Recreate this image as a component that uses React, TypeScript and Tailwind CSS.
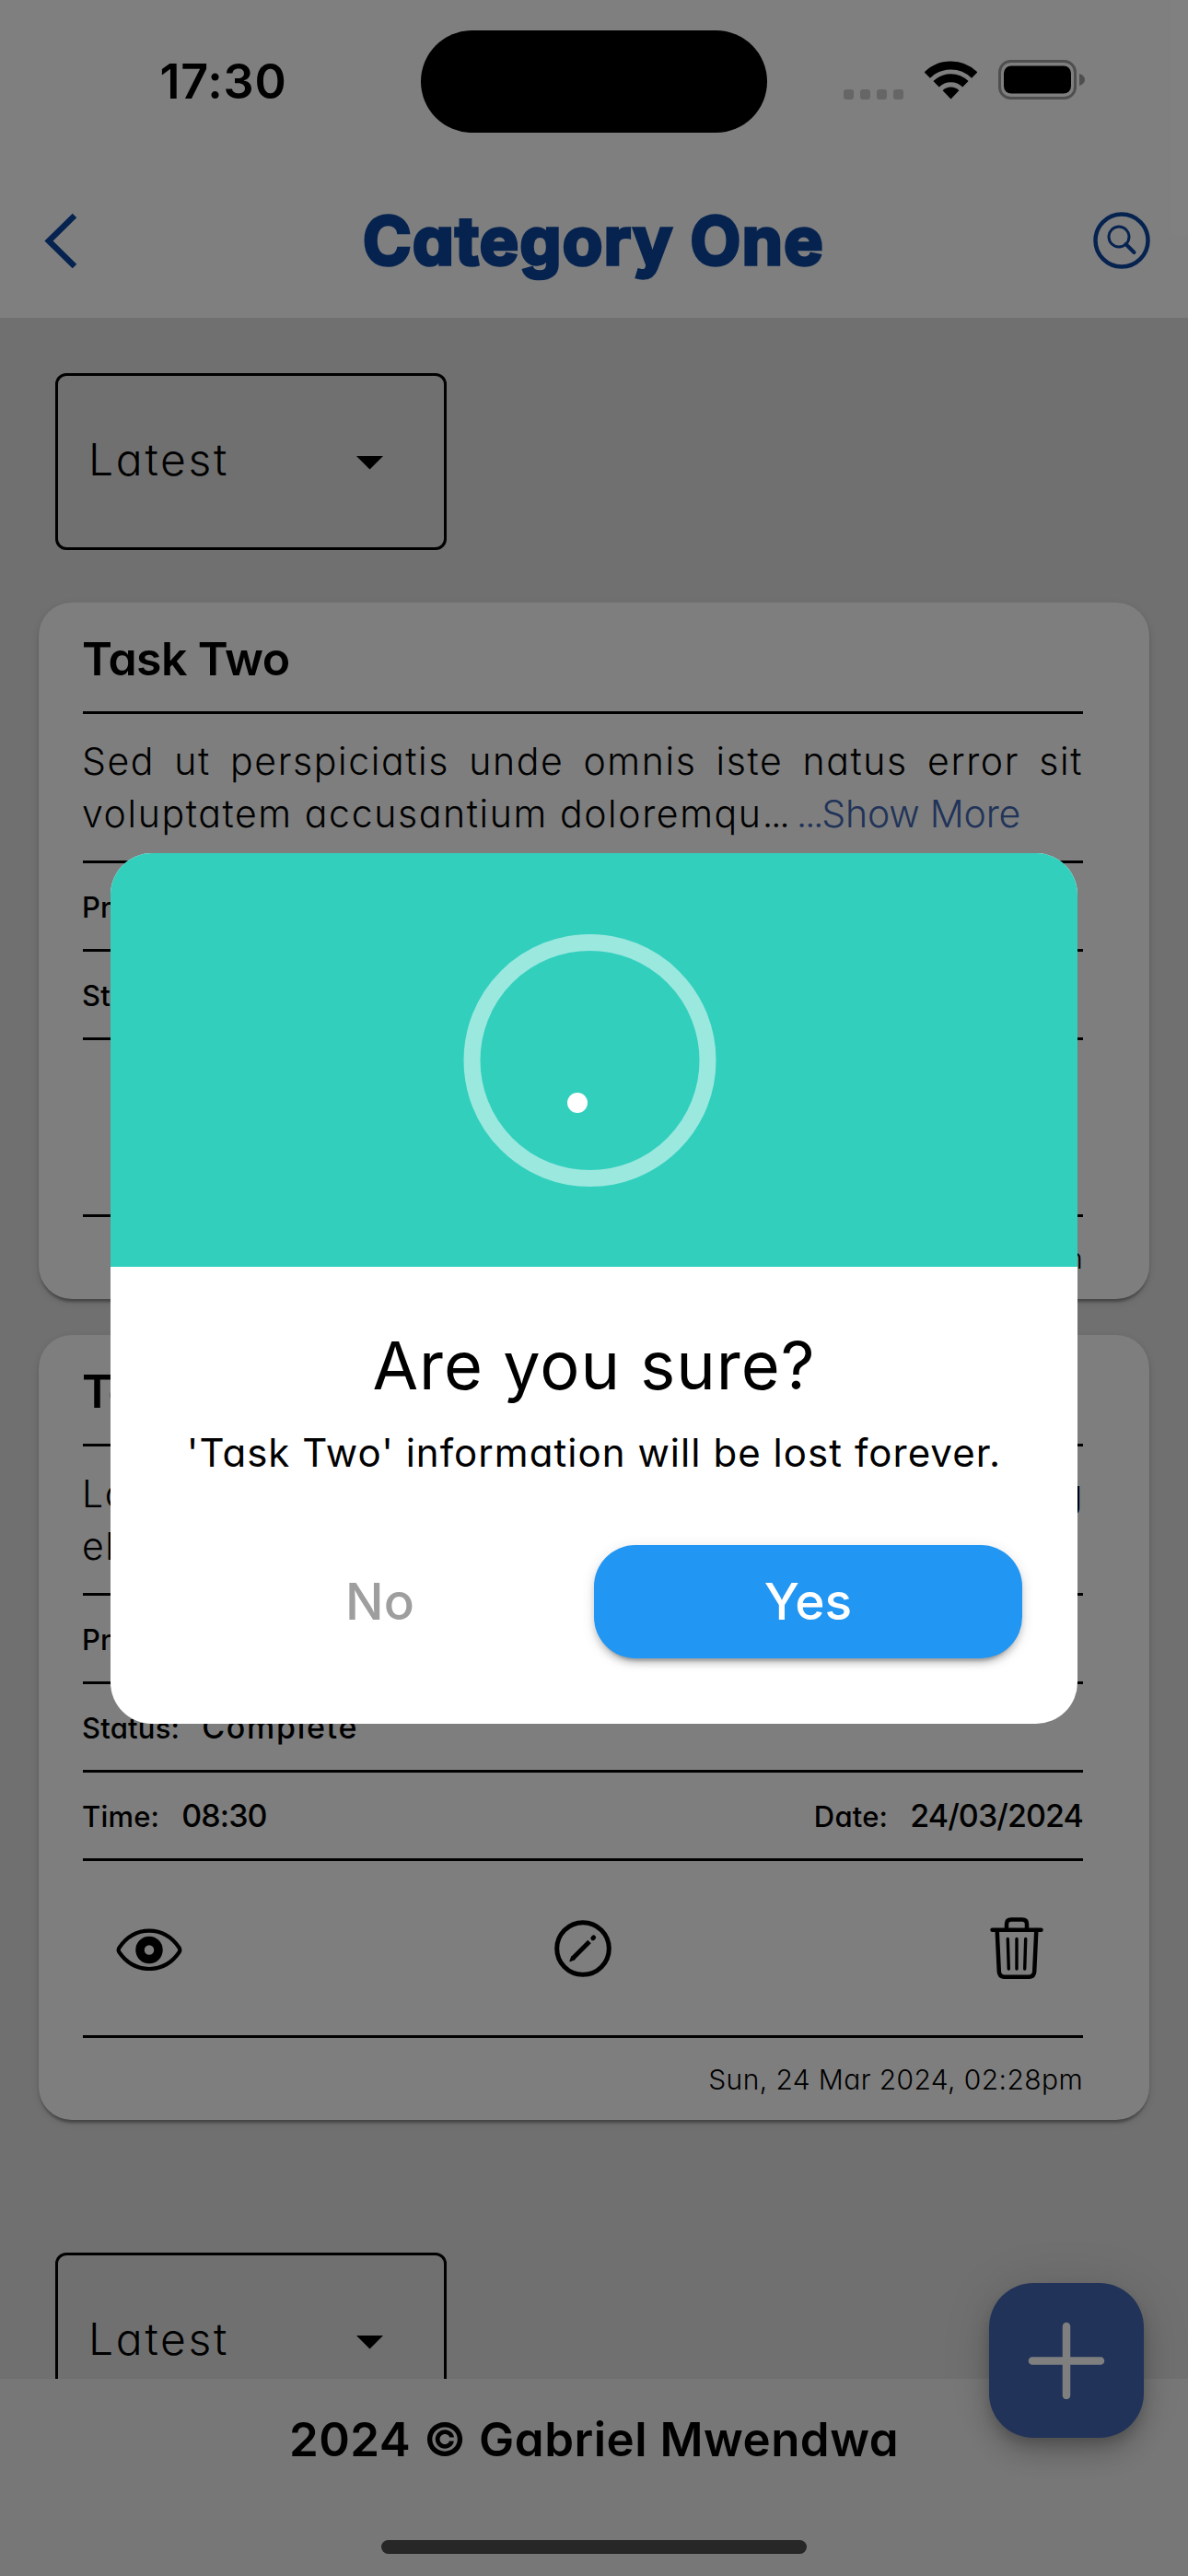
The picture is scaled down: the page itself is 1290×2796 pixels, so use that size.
import type { ReactNode } from "react";

function StatusBar() {
  return (
    <div className="grid h-[177px] shrink-0 grid-cols-[457px_376px_457px] items-center">
      <div className="pl-7 text-center text-[52px] leading-none font-semibold tracking-[0.8px]">17:30</div>
      <div className="h-[111px] rounded-full bg-black" />
      <div className="flex items-end gap-[23px] pb-[4px] pl-[83px]">
        <div className="flex gap-[7px]">
          {[0, 1, 2, 3].map((i) => (
            <span key={i} className="h-[11px] w-[11px] rounded-[3px] bg-[#cccccc]" />
          ))}
        </div>
        <svg width="57" height="43" viewBox="0 0 57 43" fill="none" stroke="#000">
          <path d="M2.8 16.5A36.5 36.5 0 0 1 54.2 16.5" strokeWidth="9" />
          <path d="M12.6 26.3A22.5 22.5 0 0 1 44.4 26.3" strokeWidth="9" />
          <path d="M28.5 42.5L19.6 33.2A12.6 12.6 0 0 1 37.4 33.2Z" fill="#000" stroke="none" />
        </svg>
        <svg width="95" height="43" viewBox="0 0 95 43" fill="none">
          <rect x="1.5" y="1.5" width="82" height="40" rx="12" stroke="#9e9e9e" strokeWidth="3" />
          <rect x="6" y="6.5" width="73" height="30" rx="8" fill="#000" />
          <path d="M88 15C91.500 16 94 18.500 94 21.500S91.500 27 88 28Z" fill="#9e9e9e" />
        </svg>
      </div>
    </div>
  );
}

function Header() {
  return (
    <header className="flex h-[168px] shrink-0 items-center justify-between pr-[41px] pl-[48px] text-[#0d47a1]">
      <svg width="62" height="60" viewBox="0 0 62 60" fill="none" stroke="currentColor" strokeWidth="6.500">
        <path d="M33 3L5 30.500L33 58" />
      </svg>
      <h1 className="mr-[8px] text-[71px] leading-[100px] font-bold tracking-[1.4px] [-webkit-text-stroke:3.5px_#0d47a1] [stroke-linejoin:round]">
        Category One
      </h1>
      <svg width="62" height="62" viewBox="0 0 62 62" fill="none" stroke="currentColor">
        <circle cx="31" cy="31" r="28.500" strokeWidth="4.500" />
        <circle cx="28" cy="27" r="11" strokeWidth="3" />
        <path d="M35.500 35L44.500 44" strokeWidth="4" strokeLinecap="round" />
      </svg>
    </header>
  );
}

function SortSelect() {
  return (
    <div className="ml-[60px] flex h-[192px] w-[425px] shrink-0 items-center justify-between rounded-[12px] border-3 border-black pr-[66px] pb-[4px] pl-[33px]">
      <span className="text-[48px] leading-none font-[350] tracking-[2.7px]">Latest</span>
      <svg width="29" height="15" viewBox="0 0 29 15" className="mt-[6px]">
        <path d="M0 0H29L14.500 14.500Z" />
      </svg>
    </div>
  );
}

const Rule = () => <div className="h-[3px] shrink-0 bg-black" />;

function Field({ label, value, tight }: { label: string; value: string; tight?: boolean }) {
  return (
    <div className="flex h-[93px] items-baseline gap-[24px] leading-[94px] font-medium">
      <span className="-ml-px text-[31px] tracking-[0.2px]">{label}</span>
      <span className={tight ? "text-[34px] tracking-[-0.9px]" : "text-[34px] tracking-[1.7px]"}>{value}</span>
    </div>
  );
}

function EyeIcon() {
  return (
    <svg width="72" height="48" viewBox="0 0 72 48" fill="none" stroke="#000">
      <path
        d="M3.300 23.200C11 12 22 4.700 36 4.700S61 12 68.700 23.200Q70 25.500 68.700 27.800C61 39 50 46 36 46S11 39 3.300 27.800Q2 25.500 3.300 23.200Z"
        strokeWidth="4.200"
        strokeLinejoin="round"
      />
      <circle cx="36" cy="25.500" r="10" strokeWidth="9.500" />
    </svg>
  );
}

function PencilIcon() {
  return (
    <svg width="72" height="62" viewBox="-5 0 72 62" fill="none" stroke="#000">
      <circle cx="31" cy="31" r="28.300" strokeWidth="5" />
      <path d="M20.500 41L38 23.500" strokeWidth="5" />
      <path d="M18.800 39.300L16.800 44.800L22.300 42.800Z" fill="#000" strokeWidth="1" strokeLinejoin="round" />
      <path d="M41.800 19.700L42.600 18.900" strokeWidth="5" strokeLinecap="round" />
    </svg>
  );
}

function TrashIcon() {
  return (
    <svg width="72" height="67" viewBox="-7.500 0 72 67" fill="none" stroke="#000" strokeLinecap="round" strokeLinejoin="round">
      <path d="M2 13.800H55" strokeWidth="4.500" />
      <path d="M17.500 13V7.500Q17.500 2.500 22.500 2.500H34.500Q39.500 2.500 39.500 7.500V13" strokeWidth="4.500" />
      <path d="M7.200 14L9.300 59Q9.800 64.800 15.500 64.800H41.500Q47.200 64.800 47.700 59L49.800 14" strokeWidth="4.500" />
      <path d="M18.800 23.500L19.800 56M28.500 23.500V56M38.200 23.500L37.200 56" strokeWidth="3.400" />
    </svg>
  );
}

function TaskCard({
  title,
  status,
  stamp,
  schedule,
  children,
}: {
  title: string;
  status: string;
  stamp: string;
  schedule?: { time: string; date: string };
  children: ReactNode;
}) {
  return (
    <article className="mx-[42px] flex shrink-0 flex-col rounded-[36px] bg-[#fcfcfc] pr-[72px] pl-[48px] shadow-[0_6px_3px_-3px_rgba(0,0,0,0.2),0_3px_3px_rgba(0,0,0,0.14),0_3px_9px_rgba(0,0,0,0.12)]">
      <h2 className="-ml-px h-[118px] pt-[4px] text-[50px] leading-[114px] font-semibold tracking-[-0.6px]">{title}</h2>
      <Rule />
      <div className="-ml-px h-[159px] pt-[23px] text-[41px] leading-[57px] font-[350] tracking-[1.6px]">{children}</div>
      <Rule />
      <Field label="Priority:" value="High" />
      <Rule />
      <Field label="Status:" value={status} />
      <Rule />
      {schedule && (
        <>
          <div className="flex justify-between">
            <Field label="Time:" value={schedule.time} tight />
            <Field label="Date:" value={schedule.date} tight />
          </div>
          <Rule />
        </>
      )}
      <div className="flex h-[189px] items-center justify-between px-9">
        <EyeIcon />
        <PencilIcon />
        <TrashIcon />
      </div>
      <Rule />
      <p className="h-[89px] text-right text-[30px] leading-[91px] font-[350] tracking-[0.4px]">{stamp}</p>
    </article>
  );
}

function ConfirmDialog() {
  return (
    <div className="absolute inset-0 flex items-center justify-center bg-black/50">
      <div role="dialog" className="flex h-[945px] w-[1050px] flex-col overflow-hidden rounded-[45px] bg-white">
        <div className="flex h-[449px] shrink-0 items-center justify-center bg-[#33cfbd]">
          <svg width="290" height="290" viewBox="0 0 290 290">
            <circle cx="140.500" cy="146" r="128" fill="none" stroke="#9be8df" strokeWidth="18" />
            <circle cx="127" cy="192" r="11" fill="#fff" />
          </svg>
        </div>
        <h3 className="mt-[57px] text-center text-[72px] leading-[100px] tracking-[1px]">Are you sure?</h3>
        <p className="mt-[15px] text-center text-[42px] leading-[60px] tracking-[1.05px]">
          'Task Two' information will be lost forever.
        </p>
        <div className="mx-[60px] mt-[70px] flex h-[123px] shrink-0 text-[55px] leading-[120px] font-medium">
          <button className="w-1/2 text-[#9e9e9e]">No</button>
          <button className="w-1/2 rounded-[45px] bg-[#2196f3] text-white shadow-[0_9px_3px_-6px_rgba(0,0,0,0.2),0_6px_6px_rgba(0,0,0,0.14),0_3px_15px_rgba(0,0,0,0.12)]">
            Yes
          </button>
        </div>
      </div>
    </div>
  );
}

export default function App() {
  return (
    <div className="relative flex h-[2796px] w-[1290px] flex-col overflow-hidden bg-white font-['Inter','Liberation_Sans',sans-serif] text-black [font-feature-settings:'cv11']">
      <StatusBar />
      <Header />
      <main className="flex min-h-0 flex-1 flex-col overflow-hidden bg-[#e0e0e0] pt-[60px]">
        <SortSelect />
        <div className="mt-[57px] mb-[144px] flex shrink-0 flex-col gap-[39px]">
          <TaskCard title="Task Two" status="Pending" stamp="Sun, 24 Mar 2024, 02:29pm">
            <div className="[text-align-last:justify]">Sed ut perspiciatis unde omnis iste natus error sit</div>
            <div className="flex whitespace-nowrap">
              <span>voluptatem accusantium doloremqu</span>
              <span className="tracking-[-2.2px]">...</span>
              <span className="ml-[9px] tracking-[-2.4px] text-[#4267b2]">...</span>
              <span className="tracking-[-0.2px] text-[#4267b2]">Show More</span>
            </div>
          </TaskCard>
          <TaskCard
            title="Task One"
            status="Complete"
            stamp="Sun, 24 Mar 2024, 02:28pm"
            schedule={{ time: "08:30", date: "24/03/2024" }}
          >
            <div className="-mr-px [text-align-last:justify]">Lorem ipsum dolor sit amet, consectetur adipiscing</div>
            <div>elit, sed do eiusmod tempor</div>
          </TaskCard>
        </div>
        <SortSelect />
      </main>
      <footer className="flex h-[214px] shrink-0 flex-col items-center bg-[#efefef]">
        <p className="text-[51px] leading-[132px] font-semibold tracking-[0.5px]">2024 © Gabriel Mwendwa</p>
        <div className="mt-[43px] h-[15px] w-[462px] rounded-full bg-[#4e4e4e]" />
      </footer>
      <button className="absolute right-[48px] bottom-[150px] flex h-[168px] w-[168px] items-center justify-center rounded-[48px] bg-[#4267b2] shadow-[0_9px_15px_-3px_rgba(0,0,0,0.2),0_18px_30px_rgba(0,0,0,0.14),0_3px_54px_rgba(0,0,0,0.12)]">
        <svg width="84" height="84" viewBox="0 0 84 84" stroke="#fff" strokeWidth="8.500" strokeLinecap="round">
          <path d="M42 5V80M5 42.500H79" />
        </svg>
      </button>
      <ConfirmDialog />
    </div>
  );
}
